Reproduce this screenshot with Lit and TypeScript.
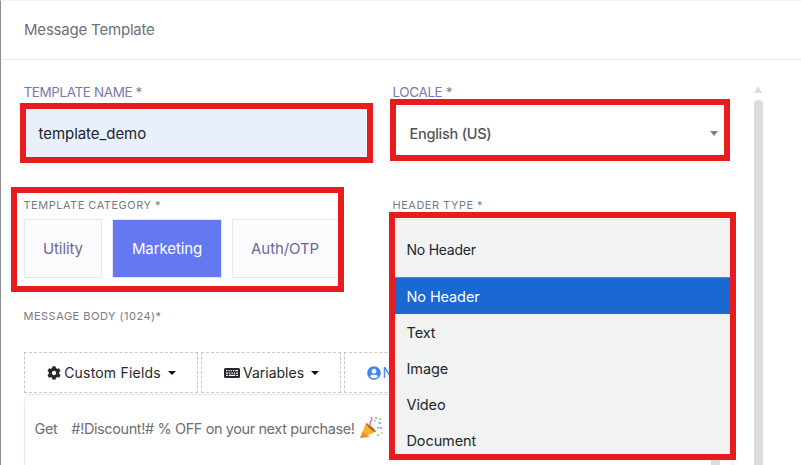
import { LitElement, html, css, svg } from "lit";
import { customElement } from "lit/decorators.js";

const gear = svg`<path d="M487.4 315.7l-42.6-24.6c4.3-23.2 4.3-47 0-70.2l42.6-24.6c4.9-2.8 7.1-8.6 5.5-14-11.1-35.6-30-67.8-54.7-94.6-3.8-4.1-10-5.1-14.8-2.3L380.8 110c-17.9-15.4-38.5-27.3-60.8-35.1V25.8c0-5.6-3.9-10.5-9.4-11.7-36.7-8.2-74.3-7.8-109.2 0-5.5 1.2-9.4 6.1-9.4 11.7V75c-22.2 7.9-42.8 19.8-60.8 35.1L88.7 85.5c-4.9-2.8-11-1.9-14.8 2.3-24.7 26.7-43.6 58.9-54.7 94.6-1.7 5.4.6 11.2 5.5 14L67.3 221c-4.3 23.2-4.3 47 0 70.2l-42.6 24.6c-4.9 2.8-7.1 8.6-5.5 14 11.1 35.6 30 67.8 54.7 94.6 3.8 4.1 10 5.1 14.8 2.3l42.6-24.6c17.9 15.4 38.5 27.3 60.8 35.1v49.2c0 5.6 3.9 10.5 9.4 11.7 36.7 8.2 74.3 7.8 109.2 0 5.5-1.2 9.4-6.1 9.4-11.7v-49.2c22.2-7.9 42.8-19.8 60.8-35.1l42.6 24.6c4.9 2.8 11 1.9 14.8-2.3 24.7-26.7 43.6-58.9 54.7-94.6 1.5-5.5-.7-11.3-5.6-14.1zM256 336c-44.1 0-80-35.9-80-80s35.9-80 80-80 80 35.9 80 80-35.9 80-80 80z"/>`;
const user = svg`<path d="M248 8C111 8 0 119 0 256s111 248 248 248 248-111 248-248S385 8 248 8zm0 96c48.6 0 88 39.4 88 88s-39.4 88-88 88-88-39.4-88-88 39.4-88 88-88zm0 344c-58.7 0-111.3-26.6-146.5-68.2 18.8-35.4 55.6-59.8 98.5-59.8 2.4 0 4.8.4 7.1 1.1 13 4.2 26.6 6.9 40.9 6.9 14.3 0 28-2.7 40.9-6.9 2.3-.7 4.7-1.1 7.1-1.1 42.9 0 79.7 24.4 98.5 59.8C359.3 421.4 306.7 448 248 448z"/>`;
const keyboard = svg`<path fill-rule="evenodd" d="M1.5 1h13A1.5 1.5 0 0 1 16 2.500v7a1.500 1.500 0 0 1-1.500 1.500h-13A1.500 1.500 0 0 1 0 9.500v-7A1.500 1.500 0 0 1 1.500 1zM2 3v1.300h1.300V3zm2.300 0v1.300h1.300V3zm2.300 0v1.300h1.300V3zm2.300 0v1.300h1.300V3zm2.300 0v1.300h2.800V3zM2 5.400v1.300h2.200V5.400zm3.200 0v1.300h1.300V5.400zm2.300 0v1.300h1.300V5.400zm2.300 0v1.300h1.300V5.400zm2.300 0v1.300H14V5.400zM2 7.800v1.300h1.800V7.800zm2.800 0v1.300h6.400V7.800zm7.400 0v1.300H14V7.800z"/>`;
const popper = svg`
  <path d="M1 23 L7 8 L17 17 Z" fill="#f2b632"/>
  <path d="M3.500 17 L11 22 L1 23 Z" fill="#e0962a"/>
  <path d="M7 8 C10 9 16 14 17 17 C14 17 8 12 7 8 Z" fill="#a8671e"/>
  <path d="M12 2 q2 2 0 4 q-2 2 0 4" stroke="#ef6bb0" stroke-width="1.300" fill="none"/>
  <path d="M19 8 q2-1 3 1" stroke="#35b6e8" stroke-width="1.300" fill="none"/>
  <circle cx="17" cy="3" r="1" fill="#4fc3f0"/>
  <circle cx="21" cy="4" r="1" fill="#8ed14f"/>
  <circle cx="22" cy="13" r="1" fill="#ef6bb0"/>
  <circle cx="19" cy="20" r="1" fill="#4fc3f0"/>
  <circle cx="23" cy="18" r=".9" fill="#f2b632"/>
  <rect x="15" y="5" width="2" height="1.300" fill="#8ed14f"/>
  <rect x="18" y="12" width="2.200" height="1.300" fill="#35b6e8"/>
`;

@customElement("app-root")
export class AppRoot extends LitElement {
  static styles = css`
    :host {
      display: block;
      position: relative;
      width: 801px;
      height: 465px;
      overflow: hidden;
      background: #fff;
      font-family: "Inter", "Liberation Sans", sans-serif;
      box-sizing: border-box;
      border-left: 1.5px solid #8a8a94;
      border-top: 1px solid #f0f2f6;
    }
    * { box-sizing: border-box; }
    .head {
      height: 59px;
      border-bottom: 1px solid #e8e8ec;
      padding: 20px 0 0 23px;
      font-size: 15px;
      line-height: 18px;
      letter-spacing: -0.2px;
      color: #6e7078;
    }
    .body {
      position: relative;
      padding: 24px 0 0 22.500px;
      width: 733px;
    }
    .grid {
      display: grid;
      grid-template-columns: 345px 340px;
      column-gap: 24px;
    }
    .label {
      display: block;
      font-size: 13.500px;
      line-height: 16px;
      letter-spacing: -0.4px;
      color: #7d78a8;
      white-space: nowrap;
    }
    .label.small {
      font-size: 11px;
      letter-spacing: 0.5px;
      color: #7a7a80;
      line-height: 14px;
    }
    .row1 { height: 114px; }
    .row2 { height: 111px; }
    .name {
      margin-top: 6px;
      height: 51px;
      background: #e8f0fe;
      display: flex;
      align-items: center;
      padding: 3px 0 0 15px;
      font-size: 15px;
      letter-spacing: -0.05px;
      color: #23242c;
    }
    .locale {
      margin-top: 6px;
      height: 51px;
      display: flex;
      align-items: center;
      justify-content: space-between;
      padding: 4px 14px 0 16px;
      font-size: 14.500px;
      font-weight: 500;
      letter-spacing: -0.25px;
      color: #50545e;
      border: 1px solid #eeeef6;
      border-radius: 6px;
    }
    .caret { width: 0; height: 0; border-left: 4px solid transparent; border-right: 4px solid transparent; border-top: 5px solid #808086; }
    .cats { display: flex; gap: 10px; margin-top: 7px; }
    .cat {
      height: 59px;
      display: flex;
      align-items: center;
      padding: 0 18.500px;
      border: 1px solid #e6e6fa;
      background: #fcfcff;
      font-size: 15px;
      letter-spacing: -0.1px;
      color: #6c6796;
      white-space: nowrap;
    }
    .cat.on { background: #6478f0; color: #fff; border-color: #e6e6fa; }
    .select {
      position: relative;
      margin-top: 7px;
      height: 59px;
      background: #f1f3f3;
      border: 1px solid #e6e6f0;
      border-bottom: 1px solid #808086;
      display: flex;
      align-items: center;
      padding: 2px 0 0 13px;
      font-size: 14px;
      letter-spacing: -0.25px;
      color: #24262e;
    }
    .menu {
      position: absolute;
      z-index: 2;
      left: -1px;
      right: -1px;
      top: 58px;
      background: #f1f3f3;
    }
    .opt {
      height: 36px;
      display: flex;
      align-items: center;
      padding-left: 14px;
      font-size: 14.500px;
      letter-spacing: -0.1px;
      color: #24262e;
    }
    .opt.on { background: #1a68d2; color: #fff; }
    .tools { display: flex; gap: 3px; margin-top: 29px; }
    .tool {
      height: 41px;
      display: flex;
      align-items: center;
      justify-content: center;
      gap: 3px;
      border: 1px dashed #c8c8cc;
      font-size: 14px;
      color: #26262c;
      white-space: nowrap;
    }
    .tool.a { width: 174px; letter-spacing: 0.2px; padding-left: 2px; }
    .tool.b { width: 140px; padding-left: 2px; }
    .tool.c { width: 180px; color: #3f86f0; justify-content: flex-start; padding-left: 22px; gap: 2px; }
    .tool svg { fill: currentColor; display: block; }
    .down { width: 0; height: 0; margin-left: 4px; border-left: 4px solid transparent; border-right: 4px solid transparent; border-top: 4.500px solid #111; }
    .area {
      position: relative;
      margin-top: 1px;
      height: 120px;
      width: 709px;
      border: 1px solid #e6e6fa;
      border-radius: 8px 8px 0 0;
      padding: 23px 0 0 10px;
      display: flex;
      align-items: center;
      align-content: flex-start;
      flex-wrap: wrap;
      font-size: 14.500px;
      letter-spacing: -0.4px;
      color: #6e6e72;
      white-space: pre;
    }
    .gap { margin-left: 3px; }
    .area svg { margin-left: 4px; margin-top: -3px; display: block; }
    .area-sb { position: absolute; top: 0; right: 12px; width: 9px; height: 118px; background: #dcdcdc; }
    .track { position: absolute; right: -29px; top: 0; width: 9px; }
    .sb-up { position: absolute; left: 0; top: 26px; width: 0; height: 0; border-left: 4.500px solid transparent; border-right: 4.500px solid transparent; border-bottom: 7px solid #dcdcdc; }
    .sb-thumb { position: absolute; left: 0; top: 40px; width: 9px; height: 380px; border-radius: 4px 4px 0 0; background: #dcdcdc; }
    .mark { position: absolute; z-index: 5; border: 6px solid #e81c1c; pointer-events: none; }
    .m1 { left: 18.500px; top: 102px; width: 353px; height: 60px; }
    .m2 { left: 388.500px; top: 98px; width: 340px; height: 62px; }
    .m3 { left: 9.500px; top: 186px; width: 333px; height: 105px; }
    .m4 { left: 387.500px; top: 211px; width: 347px; height: 248px; }
  `;

  render() {
    return html`
      <div class="head">Message Template</div>
      <div class="body">
        <div class="grid">
          <div class="row1">
            <span class="label">TEMPLATE NAME *</span>
            <div class="name">template_demo</div>
          </div>
          <div class="row1">
            <span class="label">LOCALE *</span>
            <div class="locale">English (US)<span class="caret"></span></div>
          </div>
          <div class="row2">
            <span class="label small">TEMPLATE CATEGORY *</span>
            <div class="cats">
              <div class="cat">Utility</div>
              <div class="cat on">Marketing</div>
              <div class="cat">Auth/OTP</div>
            </div>
          </div>
          <div class="row2">
            <span class="label small">HEADER TYPE *</span>
            <div class="select">
              No Header
              <div class="menu">
                <div class="opt on">No Header</div>
                <div class="opt">Text</div>
                <div class="opt">Image</div>
                <div class="opt">Video</div>
                <div class="opt">Document</div>
              </div>
            </div>
          </div>
        </div>
        <span class="label small">MESSAGE BODY (1024)*</span>
        <div class="tools">
          <div class="tool a"><svg width="14" height="14" viewBox="0 0 512 512">${gear}</svg>Custom Fields<span class="down"></span></div>
          <div class="tool b"><svg width="16" height="12" viewBox="0 0 16 12">${keyboard}</svg>Variables<span class="down"></span></div>
          <div class="tool c"><svg width="14" height="14" viewBox="0 0 496 512">${user}</svg>Name</div>
        </div>
        <div class="area">Get   <span class="gap">#!Discount!# % OFF on your next purchase!</span><svg width="24" height="24" viewBox="0 0 24 24">${popper}</svg><span class="area-sb"></span></div>
        <div class="track"><span class="sb-up"></span><span class="sb-thumb"></span></div>
      </div>
      <div class="mark m1"></div>
      <div class="mark m2"></div>
      <div class="mark m3"></div>
      <div class="mark m4"></div>
    `;
  }
}
